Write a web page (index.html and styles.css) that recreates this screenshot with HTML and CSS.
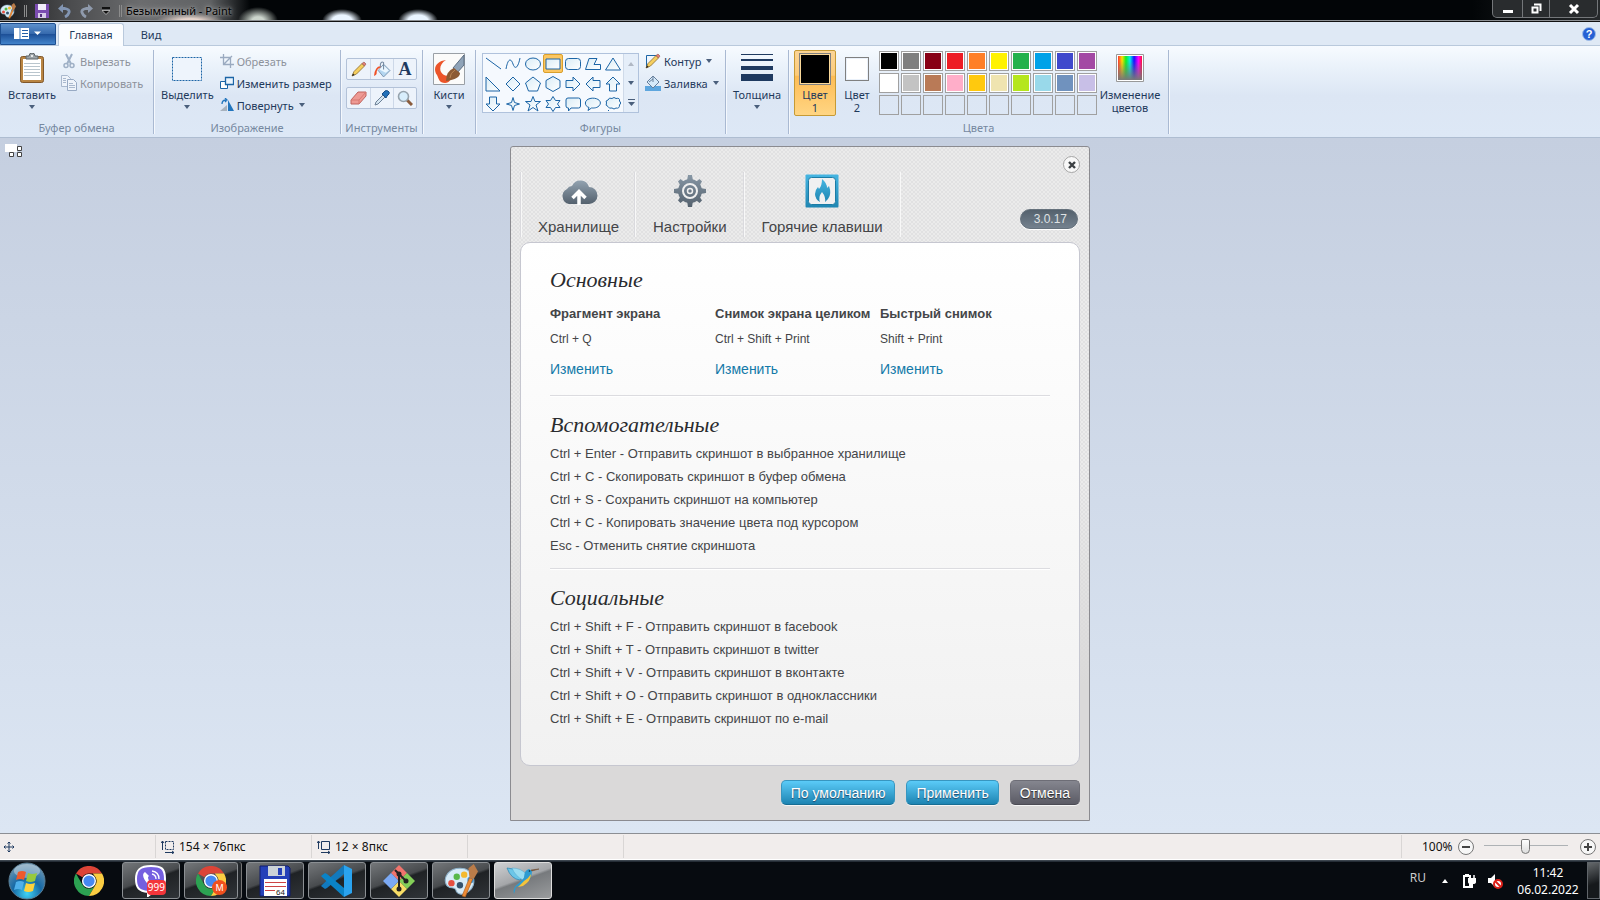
FILE: index.html
```html
<!DOCTYPE html>
<html lang="ru">
<head>
<meta charset="utf-8">
<title>Безымянный - Paint</title>
<link rel="stylesheet" href="styles.css">
</head>
<body>
<svg class="defs" width="0" height="0" aria-hidden="true">
  <defs>
    <linearGradient id="steel" x1="0" y1="0" x2="0" y2="1"><stop offset="0" stop-color="#93a3b1"/><stop offset="1" stop-color="#54616e"/></linearGradient>
    <linearGradient id="steelpage" gradientUnits="userSpaceOnUse" x1="0" y1="3" x2="0" y2="35"><stop offset="0" stop-color="#8797a5"/><stop offset="1" stop-color="#54616e"/></linearGradient>
    <linearGradient id="azure" x1="0" y1="0" x2="0" y2="1"><stop offset="0" stop-color="#45b5e2"/><stop offset="1" stop-color="#1f86b2"/></linearGradient>
    <linearGradient id="shapefill" x1="0" y1="0" x2="1" y2="1"><stop offset="0" stop-color="#d9ecf6"/><stop offset="1" stop-color="#fff"/></linearGradient>
    <linearGradient id="rainbow"><stop offset="0" stop-color="#f33"/><stop offset=".17" stop-color="#fd0"/><stop offset=".33" stop-color="#1e2"/><stop offset=".5" stop-color="#0ee"/><stop offset=".67" stop-color="#11f"/><stop offset=".85" stop-color="#f0f"/><stop offset="1" stop-color="#f13"/></linearGradient>
    <linearGradient id="fade" x1="0" y1="0" x2="0" y2="1"><stop offset=".2" stop-color="#777" stop-opacity="0"/><stop offset="1" stop-color="#777"/></linearGradient>
    <radialGradient id="orb" cx=".5" cy=".85" r=".9"><stop offset="0" stop-color="#3fd3f5"/><stop offset=".45" stop-color="#1669a5"/><stop offset="1" stop-color="#7f9fb5"/></radialGradient>
    <symbol id="pencil" viewBox="0 0 16 16"><path d="M1 15l2-4.500L11 2.500l2.500 2.500L5.500 13z" fill="#f5cf60" stroke="#8a6a2c" stroke-width=".8"/><path d="M11 2.500l2-1.500 2 2-1.500 2z" fill="#e08078" stroke="#96504a" stroke-width=".6"/><path d="M1 15l1-2.600 1.700 1.500z" fill="#222"/></symbol>
    <symbol id="bucket" viewBox="0 0 16 16"><path d="M9 3l6 6-6 6-5-6z" fill="#b4d6f0" stroke="#6f8ba8" stroke-width=".8"/><path d="M5 8l4-4 5 5-3 2z" fill="#eaf6ff"/><path d="M9 8V1.500q-2-1.500-3 1.500v3" fill="none" stroke="#768ba3"/><path d="M6 5Q1 5 0 14q3-1 2.500-4Q3 7 6 6z" fill="#ef5127"/></symbol>
    <symbol id="palette" viewBox="0 0 32 32"><path d="M15 4C5 4-1 12 2 19c2 5 8 2 9 5 1 5 7 6 12 2C32 20 29 4 15 4z" fill="#d7ebf7" stroke="#8fb2ca"/><circle cx="15" cy="20" r="3" fill="#35536e"/><circle cx="7" cy="18" r="3" fill="#e54f40"/><circle cx="12" cy="12" r="3" fill="#58b84a"/><circle cx="19" cy="10" r="3" fill="#f4b92f"/><circle cx="25" cy="15" r="3" fill="#3c93d5"/><path d="M17 30l7-17 3 1-7 17z" fill="#ed8b35" stroke="#a65a1c" stroke-width=".6"/><path d="M24 13l-1-9 5-4 4 7-4 7z" fill="#ba7c49"/></symbol>
    <symbol id="chrome" viewBox="0 0 32 32"><path d="M2.100 8A16 16 0 0 1 29.900 8H16a8 8 0 0 0-7 4z" fill="#dc4437"/><path d="M2.100 8A16 16 0 0 0 16 32l7-12a8 8 0 0 1-14 0z" fill="#2ca252"/><path d="M29.900 8A16 16 0 0 1 16 32l7-12a8 8 0 0 0 0-8l-3-4z" fill="#fbcd42"/><circle cx="16" cy="16" r="7.500" fill="#fff"/><circle cx="16" cy="16" r="6" fill="#4688f1"/></symbol>
  </defs>
</svg>

<header class="titlebar">
  <div class="quick">
    <svg width="16" height="16"><use href="#palette"/></svg>
    <span class="grip"></span>
    <button class="tiny" aria-label="Сохранить"><svg width="14" height="14" viewBox="0 0 14 14"><path d="M0 0h14v14H0z" fill="#7b4cb0"/><path d="M3 0h8v6H3z" fill="#f2edfa"/><path d="M3 9h8v5H3z" fill="#d8cce9"/><path d="M5 10h2v3H5z" fill="#553080"/></svg></button>
    <button class="tiny" aria-label="Отменить"><svg width="13" height="14" viewBox="0 0 13 14"><path d="M3 4.500h4q5 1 4 4t-4 4.500" fill="none" stroke="#8295b2" stroke-width="2.800"/><path d="M0 4.500L5 0v9z" fill="#8295b2"/></svg></button>
    <button class="tiny" aria-label="Вернуть"><svg width="13" height="14" viewBox="0 0 13 14"><path d="M10 4.500H6q-5 1-4 4t4 4.500" fill="none" stroke="#8f9aac" stroke-width="2.800"/><path d="M13 4.500L8 0v9z" fill="#8f9aac"/></svg></button>
    <button class="tiny" aria-label="Настройка панели"><svg width="8" height="8" viewBox="0 0 8 8"><path d="M0 1h8" stroke="#111" stroke-width="2"/><path d="M0 3.500h8L4 7.500z" fill="#111" stroke="#ddd" stroke-width=".7"/></svg></button>
    <span class="grip"></span>
    <span class="wintitle">Безымянный - Paint</span>
  </div>
  <div class="wincontrols">
    <button class="wc" aria-label="Свернуть"><svg width="12" height="12" viewBox="0 0 12 12"><path d="M1 7h10v3H1z" fill="#fff"/></svg></button>
    <button class="wc restore" aria-label="Восстановить"><svg width="12" height="12" viewBox="0 0 12 12"><path d="M4 1.500h6.500V8M2.500 4.500h5v5h-5z" fill="none" stroke="#fff" stroke-width="2"/></svg></button>
    <button class="wc close" aria-label="Закрыть"><svg width="12" height="12" viewBox="0 0 12 12"><path d="M2 2l8 8M10 2l-8 8" stroke="#fff" stroke-width="3"/></svg></button>
  </div>
</header>

<nav class="tabs">
  <button class="filemenu" aria-label="Меню Paint"><svg width="28" height="14" viewBox="0 0 28 14"><path d="M0 1h15v11H0z" fill="#fff"/><path d="M6 1v11" stroke="#3a76bb"/><path d="M8 3.500h6M8 6.500h6M8 9.500h6" stroke="#235fa8"/><path d="M20 4.500h7L23.500 8z" fill="#fff"/></svg></button>
  <button class="tab active">Главная</button>
  <button class="tab">Вид</button>
  <button class="help" aria-label="Справка">?</button>
</nav>

<section class="ribbon">
  <div class="group g-clip">
    <div class="gbody">
      <button class="big"><svg width="32" height="32" viewBox="0 0 32 32"><rect x="4.500" y="3.500" width="23" height="26" rx="2" fill="#b98543" stroke="#80572a"/><path d="M7 6h18v21H7z" fill="#fff"/><path d="M8 10.500h16M8 13.500h16M8 16.500h16M8 19.500h16M8 22.500h16" stroke="#b9c5cd"/><path d="M10 6V3h3q0-3 3-3t3 3h3v3z" fill="#9ba3a8" stroke="#5c6468"/><circle cx="16" cy="3" r="1" fill="#fff"/></svg><span>Вставить</span><i class="arrow"></i></button>
      <div class="smalls">
        <button class="small off"><svg width="16" height="16" viewBox="0 0 16 16"><path d="M5 1l5 10M11 1L6 11" stroke="#9fb0c6" stroke-width="2"/><circle cx="5" cy="12.500" r="2" fill="none" stroke="#9fb0c6" stroke-width="1.500"/><circle cx="11" cy="12.500" r="2" fill="none" stroke="#9fb0c6" stroke-width="1.500"/></svg>Вырезать</button>
        <button class="small off"><svg width="16" height="16" viewBox="0 0 16 16"><path d="M.5.5h6l3 3v8h-9z" fill="#eef3fa" stroke="#a9b8cd"/><path d="M6.500 4.500h6l3 3v8h-9z" fill="#eef3fa" stroke="#98aac4"/><path d="M8 8.500h4M8 10.500h6M8 12.500h6M2 3.500h3M2 5.500h3M2 7.500h3" stroke="#a9b8cd"/></svg>Копировать</button>
      </div>
    </div>
    <div class="glabel">Буфер обмена</div>
  </div>

  <div class="group g-image">
    <div class="gbody">
      <button class="big"><svg width="32" height="32" viewBox="0 0 32 32"><rect x="1.500" y="4.500" width="29" height="23" fill="#eef4fc" stroke="#1c65a6" stroke-dasharray="2 1"/></svg><span>Выделить</span><i class="arrow"></i></button>
      <div class="smalls">
        <button class="small off"><svg width="14" height="14" viewBox="0 0 14 14"><path d="M3.500 0v10.500H14M0 3.500h10.500V14M4 10l8-8" fill="none" stroke="#9aaac0" stroke-width="1.300"/></svg>Обрезать</button>
        <button class="small"><svg width="14" height="14" viewBox="0 0 14 14"><path d="M5 5.500H.5v7h7V9" fill="#fff" stroke="#1c65a6"/><path d="M5.500 1.500h8v7h-8z" fill="#eaf4fd" stroke="#1c65a6" stroke-width="1.300"/></svg>Изменить размер</button>
        <button class="small"><svg width="14" height="14" viewBox="0 0 14 14"><path d="M8 2v11h6z" fill="#2275bd"/><path d="M7 7v6H0z" fill="#a8b2bd"/><path d="M2 6q0-4 4-4M5 0l2 2-2 2" fill="none" stroke="#2275bd" stroke-width="1.300"/></svg>Повернуть<i class="arrow"></i></button>
      </div>
    </div>
    <div class="glabel">Изображение</div>
  </div>

  <div class="group g-tools">
    <div class="gbody toolrows">
      <div class="toolrow">
        <button aria-label="Карандаш"><svg width="16" height="16"><use href="#pencil"/></svg></button>
        <button aria-label="Заливка цветом"><svg width="17" height="17"><use href="#bucket"/></svg></button>
        <button class="letter">A</button>
      </div>
      <div class="toolrow">
        <button aria-label="Ластик"><svg width="17" height="15" viewBox="0 0 17 15"><path d="M1 9l7-8h8v4l-7 8H1z" fill="#ee9a94" stroke="#c0625c"/><path d="M1 9h8l7-8M9 9v4" fill="none" stroke="#d77871"/></svg></button>
        <button aria-label="Палитра"><svg width="16" height="16" viewBox="0 0 16 16"><path d="M1 15l1-3 7-7 2 2-7 7z" fill="#d6e6f2" stroke="#6c8096"/><path d="M8 4l4 4 1-2 2-2q1-2-1-3t-3 0L9 3z" fill="#2270b8" stroke="#174e88"/></svg></button>
        <button aria-label="Масштаб"><svg width="16" height="16" viewBox="0 0 16 16"><path d="M10 10l5 5" stroke="#8a5c3c" stroke-width="3"/><circle cx="6.500" cy="6.500" r="5" fill="#d8eefc" stroke="#96a3ad" stroke-width="1.600"/></svg></button>
      </div>
    </div>
    <div class="glabel">Инструменты</div>
  </div>

  <div class="group g-brush">
    <div class="gbody">
      <button class="big"><svg width="32" height="32" viewBox="0 0 32 32"><path d="M.5.5h31v31H.5z" fill="#fbfbfa" stroke="#9aa0a6"/><path d="M13 7C4 8-1 15 4 22c2 4 2 8 8 8 5 0 6-4 6-8-5 2-8 0-10-3-2-4 0-9 5-12z" fill="#ec552a"/><path d="M20 15L31 2v10l-7 8z" fill="#8fa3b8" stroke="#5c6e82"/><path d="M13 28q0-10 8-13l6 5q0 6-14 8z" fill="#8c5b34"/><path d="M17 25q0-5 5-8" fill="none" stroke="#b98452"/></svg><span>Кисти</span><i class="arrow"></i></button>
    </div>
  </div>

  <div class="group g-shapes">
    <div class="gbody">
      <div class="gallery">
        <div class="shapes">
          <button aria-label="Линия"><svg viewBox="0 0 20 20"><path d="M3 4l15 11"/></svg></button>
          <button aria-label="Кривая"><svg viewBox="0 0 20 20"><path d="M3 15C5 4 8 4 10 10s5 4 7-6" fill="none"/></svg></button>
          <button aria-label="Овал"><svg viewBox="0 0 20 20"><ellipse cx="10" cy="10" rx="7.500" ry="6"/></svg></button>
          <button class="picked" aria-label="Прямоугольник"><svg viewBox="0 0 20 20"><path d="M3 5h14v10H3z"/></svg></button>
          <button aria-label="Скругленный прямоугольник"><svg viewBox="0 0 20 20"><rect x="2.500" y="4.500" width="15" height="11" rx="3"/></svg></button>
          <button aria-label="Многоугольник"><svg viewBox="0 0 20 20"><path d="M6 4.500h8l-3 6h6.500v5h-15z"/></svg></button>
          <button aria-label="Треугольник"><svg viewBox="0 0 20 20"><path d="M10 4l7.500 12h-15z"/></svg></button>
          <button aria-label="Прямоугольный треугольник"><svg viewBox="0 0 20 20"><path d="M3 3v14h14z"/></svg></button>
          <button aria-label="Ромб"><svg viewBox="0 0 20 20"><path d="M10 3l7 7-7 7-7-7z"/></svg></button>
          <button aria-label="Пятиугольник"><svg viewBox="0 0 20 20"><path d="M10 3l7.500 6-3 8h-9l-3-8z"/></svg></button>
          <button aria-label="Шестиугольник"><svg viewBox="0 0 20 20"><path d="M10 2.500l7 4v7l-7 4-7-4v-7z"/></svg></button>
          <button aria-label="Стрелка вправо"><svg viewBox="0 0 20 20"><path d="M3 6.500h7V3l7 7-7 7v-3.500H3z"/></svg></button>
          <button aria-label="Стрелка влево"><svg viewBox="0 0 20 20"><path d="M17 6.500h-7V3l-7 7 7 7v-3.500h7z"/></svg></button>
          <button aria-label="Стрелка вверх"><svg viewBox="0 0 20 20"><path d="M6.500 17v-7H3l7-7 7 7h-3.500v7z"/></svg></button>
          <button aria-label="Стрелка вниз"><svg viewBox="0 0 20 20"><path d="M6.500 3v7H3l7 7 7-7h-3.500V3z"/></svg></button>
          <button aria-label="Четырехконечная звезда"><svg viewBox="0 0 20 20"><path d="M10 3.500l1.500 5 5 1.500-5 1.500-1.500 5-1.500-5-5-1.500 5-1.500z"/></svg></button>
          <button aria-label="Пятиконечная звезда"><svg viewBox="0 0 20 20"><path d="M10 2.500l2 5h5.500l-4.500 3.500 2 6-5-3.500L5 17l2-6-4.500-3.500H8z"/></svg></button>
          <button aria-label="Шестиконечная звезда"><svg viewBox="0 0 20 20"><path d="M10 2.500l2.500 4h4.500L14.500 10l2.500 3.500h-4.500l-2.500 4-2.500-4H3L5.500 10 3 6.500h4.500z"/></svg></button>
          <button aria-label="Прямоугольная выноска"><svg viewBox="0 0 20 20"><path d="M5 4h10.500q2 0 2 2v6q0 2-2 2H8l-2.500 3v-3H5q-2 0-2-2V6q0-2 2-2z"/></svg></button>
          <button aria-label="Овальная выноска"><svg viewBox="0 0 20 20"><path d="M6 13.500C1 12 1 6 7 4.500c6-1.500 12 2 10 6S10 14 8.500 14L5 16.500z"/></svg></button>
          <button aria-label="Выноска-облако"><svg viewBox="0 0 20 20"><path d="M5 6q1-3 4-1.500 2-2 4 0 4-1 3.500 2.500 2.500 2 0 4 0 4-3.500 3-2 2-4 0-3 1-4-1.500-3-1-1.500-3.500-1.500-2.500 1.500-3z"/><path d="M5 16.500h1"/></svg></button>
        </div>
        <div class="scroller">
          <button aria-label="Вверх"><i class="arrow up"></i></button>
          <button aria-label="Вниз"><i class="arrow"></i></button>
          <button aria-label="Все фигуры"><svg width="7" height="8" viewBox="0 0 7 8"><path d="M0 1h7v1H0zM0 4h7L3.500 8z" fill="#4a5f7c"/></svg></button>
        </div>
      </div>
      <div class="smalls">
        <button class="small"><svg width="16" height="16" viewBox="0 0 16 16"><path d="M12 2.500H1.500v11H4" fill="none" stroke="#1c65a6"/><use href="#pencil"/></svg>Контур<i class="arrow"></i></button>
        <button class="small"><svg width="16" height="16" viewBox="0 0 16 16"><path d="M0 11h16v5H0z" fill="#5ea6de"/><path d="M8 1l6 6-6 6-6-6z" fill="#d6eafa" stroke="#667f9b"/><path d="M8 7V1M4 7l4-3" fill="none" stroke="#667f9b"/></svg>Заливка<i class="arrow"></i></button>
      </div>
    </div>
    <div class="glabel">Фигуры</div>
  </div>

  <div class="group g-size">
    <div class="gbody">
      <button class="big"><svg width="32" height="32" viewBox="0 0 32 32"><path d="M0 1h32v1H0zM0 6h32v2H0zM0 13h32v4H0zM0 21h32v7H0z" fill="#1f3a60"/></svg><span>Толщина</span><i class="arrow"></i></button>
    </div>
  </div>

  <div class="group g-colors">
    <div class="gbody">
      <button class="big color selected"><b class="sw black"></b><span>Цвет</span><span class="l2">1</span></button>
      <button class="big color"><b class="sw white"></b><span>Цвет</span><span class="l2">2</span></button>
      <div class="palette">
        <button class="c1" aria-label="Черный"></button><button class="c2" aria-label="Серый"></button><button class="c3" aria-label="Темно-красный"></button><button class="c4" aria-label="Красный"></button><button class="c5" aria-label="Оранжевый"></button><button class="c6" aria-label="Желтый"></button><button class="c7" aria-label="Зеленый"></button><button class="c8" aria-label="Бирюзовый"></button><button class="c9" aria-label="Индиго"></button><button class="c10" aria-label="Лиловый"></button>
        <button class="c11" aria-label="Белый"></button><button class="c12" aria-label="Светло-серый"></button><button class="c13" aria-label="Коричневый"></button><button class="c14" aria-label="Розовый"></button><button class="c15" aria-label="Золотой"></button><button class="c16" aria-label="Бежевый"></button><button class="c17" aria-label="Лайм"></button><button class="c18" aria-label="Голубой"></button><button class="c19" aria-label="Сизый"></button><button class="c20" aria-label="Сиреневый"></button>
        <button class="none" aria-label="Пусто"></button><button class="none" aria-label="Пусто"></button><button class="none" aria-label="Пусто"></button><button class="none" aria-label="Пусто"></button><button class="none" aria-label="Пусто"></button><button class="none" aria-label="Пусто"></button><button class="none" aria-label="Пусто"></button><button class="none" aria-label="Пусто"></button><button class="none" aria-label="Пусто"></button><button class="none" aria-label="Пусто"></button>
      </div>
      <button class="big edit"><svg width="32" height="32" viewBox="0 0 32 32"><path d="M2.500 1.500h27v27h-27z" fill="#fff" stroke="#999"/><path d="M4 3h24v24H4z" fill="url(#rainbow)"/><path d="M4 3h24v24H4z" fill="url(#fade)"/></svg><span>Изменение</span><span class="l2">цветов</span></button>
    </div>
    <div class="glabel">Цвета</div>
  </div>
</section>

<main class="workspace">
  <div class="sheet"><svg width="18" height="14" viewBox="0 0 18 14"><path d="M0 0h12v8H0z" fill="#fff"/><path d="M12.500 2.500h4v4h-4zM12.500 8.500h4v4h-4zM4.500 8.500h4v4h-4z" fill="#fff" stroke="#444"/></svg></div>

  <section class="dialog" aria-label="Горячие клавиши">
    <div class="dhead">
      <div class="dtabs">
        <button class="dtab"><svg width="38" height="38" viewBox="0 0 38 38"><path d="M9 33a8 8 0 0 1-2-15 6 6 0 0 1 5-3 9 9 0 0 1 17 1 8.500 8.500 0 0 1 0 17z" transform="translate(0 -1)" fill="url(#steel)"/><path d="M19 33V22M12.500 26l6.500-6.500 6.500 6.500" fill="none" stroke="#fff" stroke-width="3.500"/></svg>Хранилище</button>
        <button class="dtab"><svg width="38" height="38" viewBox="0 0 38 38"><g fill="url(#steelpage)"><circle cx="19" cy="19" r="12"/><path d="M17 3h4l1 6h-6zM17 35h4l1-6h-6zM3 17v4l6 1v-6zM35 17v4l-6 1v-6zM7 9.500L9.500 7l5 4-4 4zM31 9.500L28.500 7l-5 4 4 4zM7 28.500L9.500 31l5-4-4-4zM31 28.500L28.500 31l-5-4 4-4z"/></g><circle cx="19" cy="19" r="7" fill="none" stroke="#f0f0f0" stroke-width="2"/><circle cx="19" cy="19" r="2.500" fill="none" stroke="#f0f0f0" stroke-width="1.500"/></svg>Настройки</button>
        <button class="dtab"><svg width="38" height="38" viewBox="0 0 38 38"><rect x="2.500" y="2.500" width="33" height="33" rx="1" fill="url(#azure)"/><rect x="5.500" y="5.500" width="27" height="27" rx="3" fill="#f0f0f1" stroke="#1c7ca6"/><path d="M19 7q5 4 5 9l2-2q3 8-1 13l-3 3q1-5-3-10-4 5-2 10-5-3-5-8 0-4 3-7l1 2q3-3 3-10z" fill="url(#azure)"/></svg>Горячие клавиши</button>
      </div>
      <div class="dside">
        <button class="dclose" aria-label="Закрыть окно"><svg width="8" height="8" viewBox="0 0 8 8"><path d="M1 1l6 6M7 1L1 7" stroke="#3c4043" stroke-width="2.400"/></svg></button>
        <span class="version">3.0.17</span>
      </div>
    </div>

    <div class="panel">
      <section class="block">
        <h2>Основные</h2>
        <div class="keys">
          <div><h3>Фрагмент экрана</h3><p>Ctrl + Q</p><a href="#">Изменить</a></div>
          <div><h3>Снимок экрана целиком</h3><p>Ctrl + Shift + Print</p><a href="#">Изменить</a></div>
          <div><h3>Быстрый снимок</h3><p>Shift + Print</p><a href="#">Изменить</a></div>
        </div>
      </section>
      <section class="block">
        <h2>Вспомогательные</h2>
        <ul>
          <li>Ctrl + Enter - Отправить скриншот в выбранное хранилище</li>
          <li>Ctrl + C - Скопировать скриншот в буфер обмена</li>
          <li>Ctrl + S - Сохранить скриншот на компьютер</li>
          <li>Ctrl + C - Копировать значение цвета под курсором</li>
          <li>Esc - Отменить снятие скриншота</li>
        </ul>
      </section>
      <section class="block">
        <h2>Социальные</h2>
        <ul>
          <li>Ctrl + Shift + F - Отправить скриншот в facebook</li>
          <li>Ctrl + Shift + T - Отправить скриншот в twitter</li>
          <li>Ctrl + Shift + V - Отправить скриншот в вконтакте</li>
          <li>Ctrl + Shift + O - Отправить скриншот в одноклассники</li>
          <li>Ctrl + Shift + E - Отправить скриншот по e-mail</li>
        </ul>
      </section>
    </div>

    <div class="actions">
      <button class="act">По умолчанию</button>
      <button class="act">Применить</button>
      <button class="act grey">Отмена</button>
    </div>
  </section>
</main>

<footer class="status">
  <div class="cell"><svg width="12" height="12" viewBox="0 0 12 12"><path d="M6 1v10M1 6h10M4.500 2.500L6 1l1.500 1.500M4.500 9.500L6 11l1.500-1.500M2.500 4.500L1 6l1.500 1.500M9.500 4.500L11 6 9.500 7.500" fill="none" stroke="#1f3a60"/></svg></div>
  <div class="cell"><svg width="14" height="14" viewBox="0 0 14 14"><path d="M1.500 10V1M0 3l1.500-2L3 3M4 12.500h9M11 11l2 1.500-2 1.500" fill="none" stroke="#1f3a60"/><path d="M4.500 1.500h8v8h-8z" fill="none" stroke="#1f3a60" stroke-dasharray="2 1"/></svg>154 × 76пкс</div>
  <div class="cell"><svg width="14" height="14" viewBox="0 0 14 14"><path d="M1.500 9V1M0 3l1.500-2L3 3M4 12.500h9M11 11l2 1.500-2 1.500M4.500 1.500h8v8h-8z" fill="none" stroke="#1f3a60"/></svg>12 × 8пкс</div>
  <div class="cell"></div>
  <div class="zoombar">
    <label for="zoom">100%</label>
    <button class="round" aria-label="Уменьшить"><svg width="10" height="10" viewBox="0 0 10 10"><path d="M1 5h8" stroke="#444" stroke-width="2"/></svg></button>
    <input id="zoom" type="range" min="0" max="100" value="50">
    <button class="round" aria-label="Увеличить"><svg width="10" height="10" viewBox="0 0 10 10"><path d="M1 5h8M5 1v8" stroke="#444" stroke-width="2"/></svg></button>
  </div>
</footer>

<footer class="taskbar">
  <button class="start" aria-label="Пуск"><svg width="38" height="38" viewBox="0 0 38 38"><circle cx="19" cy="19" r="18" fill="url(#orb)" stroke="#5b7f95"/><ellipse cx="19" cy="9" rx="13" ry="7" fill="#fff" opacity=".35"/><path d="M10 10q4-2 8 0l-2 8q-4-2-8 0z" fill="#ee5a2c"/><path d="M20 11q4 2 9 0l-2 8q-5 2-9 0z" fill="#96c93e"/><path d="M8 20q4-2 8 0l-2 8q-4-2-8 0z" fill="#4fb0ea"/><path d="M18 21q4 2 9 0l-2 8q-5 2-9 0z" fill="#fdd23c"/></svg></button>
  <button class="pin" aria-label="Chrome"><svg width="30" height="30"><use href="#chrome"/></svg></button>
  <button class="app" aria-label="Viber"><svg width="32" height="32" viewBox="0 0 32 32"><path d="M16 1c10 0 14 2 14 13s-4 13-12 13l-5 4v-4C4 26 1 23 1 14S5 1 16 1z" fill="#755fe0" stroke="#fff" stroke-width="2"/><path d="M10 7c-4 2-1 8 3 12s9 5 10 1l-4-3-2 1q-4-2-4-6l1-1z" fill="#fff"/><path d="M17 6q7 1 7 8M17 9q4 1 4 5" fill="none" stroke="#fff" stroke-width="1.300"/></svg><span class="badge">999</span></button>
  <button class="app stack" aria-label="Chrome, окна"><svg width="30" height="30"><use href="#chrome"/></svg><span class="badge m">M</span></button>
  <button class="app" aria-label="Total Commander"><svg width="32" height="32" viewBox="0 0 32 32"><path d="M1 1h28l2 2v28H1z" fill="#2540b8" stroke="#101c6c"/><path d="M9 1h17v10H9z" fill="#cbd2d8"/><path d="M19 3h4v7h-4z" fill="#2540b8"/><path d="M5 14h23v17H5z" fill="#fff"/><path d="M6 17.500h21M6 21.500h21M6 25.500h10" stroke="#c44"/><text x="17" y="30" font-family="Liberation Sans" font-size="8" fill="#222">64</text></svg></button>
  <button class="app" aria-label="Visual Studio Code"><svg width="34" height="34" viewBox="0 0 34 34"><path d="M24 1L3 20l-2 2 4 3 2-1L24 10z" fill="#1279bd"/><path d="M24 33L3 14l-2-2 4-3 2 1 17 14z" fill="#0a83c7"/><path d="M24 1l8 4v24l-8 4z" fill="#2aa3ef"/></svg></button>
  <button class="app" aria-label="Git"><svg width="34" height="34" viewBox="0 0 34 34"><path d="M17 1l8 8-8 8-8-8z" fill="#f0746d"/><path d="M25 9l8 8-8 8-8-8z" fill="#83cf58"/><path d="M17 17l8 8-8 8-8-8z" fill="#f8dd66"/><path d="M9 9l8 8-8 8-8-8z" fill="#7ba9f4"/><path d="M13 6l4 4v16M17 10l7 7" fill="none" stroke="#222" stroke-width="2"/><circle cx="17" cy="10" r="2.500" fill="#222"/><circle cx="24" cy="17" r="2.500" fill="#222"/><circle cx="17" cy="25" r="2.500" fill="#222"/></svg></button>
  <button class="app" aria-label="Paint"><svg width="34" height="34"><use href="#palette"/></svg></button>
  <button class="app lit" aria-label="Hotkeys"><svg width="34" height="30" viewBox="0 0 34 30"><path d="M1 2q4 11 13 12l5-4Q12 3 1 2z" fill="#6cc6e8" stroke="#2a82b0" stroke-width=".7"/><path d="M6 2q3 8 11 12l3-6Q15 2 6 2z" fill="#98dcf1" stroke="#4ea9cf" stroke-width=".5"/><path d="M18 12q0-8 5-9l3 2q0 9-8 13l-8 3-2 7q-2-6 5-11z" fill="#2d9bd0"/><path d="M25 8q0 7-8 12l-5 1 6-6q5-3 7-7z" fill="#f4c23a"/><path d="M25 4l8-1-7 2z" fill="#735238" stroke="#735238" stroke-width=".6"/><circle cx="23.500" cy="5" r=".8" fill="#123"/></svg></button>
  <div class="tray">
    <span class="lang">RU</span>
    <i class="arrow up"></i>
    <svg width="14" height="16" viewBox="0 0 14 16"><path d="M1 3h6v11H1z" fill="none" stroke="#fff" stroke-width="2"/><path d="M2 1h4v2H2zM5 5h8v4q0 2-3 2v4H8v-4q-3 0-3-2z" fill="#fff"/><path d="M7 2v3M11 2v3" stroke="#fff" stroke-width="1.500"/></svg>
    <svg width="16" height="16" viewBox="0 0 16 16"><path d="M1 5h3l4-4v13l-4-4H1z" fill="#fff"/><circle cx="11" cy="11" r="4" fill="#fff" stroke="#dc2019" stroke-width="2"/><path d="M8 8l6 6" stroke="#dc2019" stroke-width="2"/></svg>
    <time class="clock">11:42<br>06.02.2022</time>
    <button class="desk" aria-label="Показать рабочий стол"></button>
  </div>
</footer>
</body>
</html>
```
FILE: styles.css
```css
* { box-sizing: border-box; }
html, body { margin: 0; }
body {
  min-height: 100vh;
  display: flex;
  flex-direction: column;
  font: 11px/13px "Noto Sans", "Open Sans", sans-serif;
  color: #1e395b;
  background: #000;
}
.defs { position: absolute; }
button { font: inherit; color: inherit; background: none; border: 0; padding: 0; margin: 0; }
svg { display: block; flex: none; }

/* Title bar */
.titlebar {
  height: 22px;
  flex: none;
  display: flex;
  justify-content: space-between;
  align-items: flex-start;
  border-bottom: 1px solid #111;
  box-shadow: inset 0 -1px #8d9094;
  background:
    radial-gradient(ellipse 20px 14px at 258px 21px, rgba(226, 236, 226, .9) 30%, rgba(226, 236, 226, 0)),
    radial-gradient(ellipse 20px 12px at 342px 21px, #eaf5ff 50%, rgba(150, 190, 240, 0)),
    radial-gradient(ellipse 20px 12px at 418px 21px, #eaf5ff 50%, rgba(150, 190, 240, 0)),
    radial-gradient(ellipse 34px 8px at 190px 21px, #e8d5cc 30%, rgba(232, 213, 204, 0)),
    linear-gradient(90deg, #1b1c1e 0, #4b4c4e 70px, #6b6c6e 140px, #606264 210px, #020507 250px, #020507 92%, #26292b);
}
.quick { display: flex; align-items: center; height: 21px; gap: 8px; }
.grip { width: 3px; height: 12px; border: solid #8c8c8c; border-width: 0 1px; }
.tiny { margin-right: 1px; }
.wintitle { color: #000; margin-left: -4px; text-shadow: 0 0 6px #bbb, 0 0 3px #aaa; }
.wincontrols { display: flex; height: 18px; margin-right: 2px; border: 1px solid #74777a; border-top: 0; border-radius: 0 0 5px 5px; background: #292c2e; }
.wc { width: 30px; display: flex; justify-content: center; align-items: center; border-right: 1px solid #74777a; }
.restore { width: 27px; }
.close { width: 47px; border: 0; }

/* Ribbon tabs */
.tabs { height: 24px; flex: none; display: flex; align-items: stretch; background: #dfe9f5; border-bottom: 1px solid #b9c9dc; padding-top: 1px; }
.filemenu { width: 56px; margin-right: 2px; display: flex; align-items: center; justify-content: center; border: 1px solid #1d4f91; border-radius: 0 2px 0 0; background: linear-gradient(#5d90cb, #3569ad 50%, #1c4f97 51%, #4384cb); }
.tab { width: 66px; }
.tab.active { background: #fbfdff; border: 1px solid #b9c9dc; border-bottom: 0; border-radius: 3px 3px 0 0; margin-bottom: -1px; padding-bottom: 2px; }
.tab:not(.active) { width: 54px; }
.help { margin: 4px 4px 0 auto; width: 14px; height: 14px; border-radius: 50%; background: #2560d4; color: #fff; font: bold 11px/12px "Liberation Sans", sans-serif; border: 1px solid #9fbde8; }

/* Ribbon */
.ribbon { flex: none; display: flex; min-height: 91px; padding: 4px 0 0; border-bottom: 1px solid #aebdd1; background: linear-gradient(#f7fbff, #e9f1fa 25%, #dce6f4 55%, #dde8f6); }
.group { display: flex; flex-direction: column; flex: none; margin: 0 0 3px; border-right: 1px solid #a9b9d2; box-shadow: 1px 0 #f4f8fd; }
.gbody { display: flex; height: 66px; align-items: flex-start; }
.glabel { text-align: center; color: #7688a0; padding-top: 5px; }
.g-clip { width: 154px; }
.g-image { width: 187px; }
.g-tools { width: 82px; }
.g-brush { width: 53px; }
.g-shapes { width: 250px; }
.g-size { width: 63px; }
.g-colors { width: 380px; }
.big { display: flex; flex-direction: column; align-items: center; height: 66px; padding-top: 3px; min-width: 52px; }
.big span { margin-top: 3px; white-space: nowrap; }
.big .l2 { margin-top: 0; }
.big .arrow { margin-top: 4px; }
.arrow { display: block; width: 0; height: 0; border: solid transparent; border-width: 4px 3px 0; border-top-color: #4a5f7c; }
.arrow.up { border-width: 0 3px 4px; border-bottom-color: #b0b8c4; }
.smalls { display: flex; flex-direction: column; }
.small { display: flex; align-items: center; gap: 3px; height: 22px; white-space: nowrap; }
.small .arrow { margin-left: 2px; }
.off { color: #8d929b; }
.g-clip .gbody { padding-left: 6px; gap: 3px; }
.g-image .gbody { padding-left: 7px; gap: 6px; }
.toolrows { flex-direction: column; align-items: center; gap: 7px; padding-top: 8px; }
.toolrow { display: flex; border: 1px solid #b3c2d8; border-radius: 2px; background: #edf3fb; }
.toolrow button { width: 23px; height: 20px; display: flex; align-items: center; justify-content: center; border-left: 1px solid #cdd8e8; }
.toolrow button:first-child { border-left: 0; }
.toolrow .letter { font: bold 18px/20px "Liberation Serif", serif; color: #1f3a60; }
.g-shapes .gbody { padding-left: 6px; gap: 6px; }
.gallery { display: flex; margin-top: 3px; height: 60px; border: 1px solid #b0c2dc; background: #f5f9fe; }
.shapes { display: grid; grid-template-columns: repeat(7, 20px); grid-auto-rows: 19px; row-gap: 1px; }
.shapes button { display: flex; align-items: center; border-radius: 2px; }
.shapes svg { width: 20px; height: 20px; fill: url(#shapefill); stroke: #1c65a6; stroke-width: 1; }
.shapes .picked { background: #fcc660; border: 1px solid #d9a02c; }
.shapes .picked svg { margin: -1px; }
.scroller { display: flex; flex-direction: column; width: 15px; border-left: 1px solid #cfdae9; background: #e5eef9; }
.scroller button { flex: 1; display: flex; align-items: center; justify-content: center; }
.g-brush .gbody, .g-size .gbody { justify-content: center; }
.g-colors .gbody { padding-left: 5px; }
.color { min-width: 42px; }
.selected { border: 1px solid #c69a35; border-radius: 2px; padding-top: 2px; background: linear-gradient(#fcd597, #fccb7a 38%, #fdbc55 39%, #ffd583); }
.sw { display: block; border: 1px solid #808080; }
.black { width: 32px; height: 32px; background: #000; box-shadow: inset 0 0 0 1px #fbd999; }
.white { width: 24px; height: 24px; margin: 4px; background: #fff; box-shadow: inset 0 0 0 1px #eaf1fa; }
.palette { display: grid; grid-template-columns: repeat(10, 20px); grid-auto-rows: 20px; gap: 2px; margin: 1px 1px 0; }
.palette button { border: 1px solid #a0a0a0; box-shadow: inset 0 0 0 1px #fff; }
.palette .none { box-shadow: none; }
.edit { min-width: 64px; }
.c1 { background: #000; } .c2 { background: #7f7f7f; } .c3 { background: #880015; } .c4 { background: #ed1c24; } .c5 { background: #ff7f27; }
.c6 { background: #fff200; } .c7 { background: #22b14c; } .c8 { background: #00a2e8; } .c9 { background: #3f48cc; } .c10 { background: #a349a4; }
.c11 { background: #fff; } .c12 { background: #c3c3c3; } .c13 { background: #b97a57; } .c14 { background: #ffaec9; } .c15 { background: #ffc90e; }
.c16 { background: #efe4b0; } .c17 { background: #b5e61d; } .c18 { background: #99d9ea; } .c19 { background: #7092be; } .c20 { background: #c8bfe7; }

/* Workspace */
.workspace { flex: 1; position: relative; padding: 8px 0 12px; background: linear-gradient(#c5cfe0, #dce6f3); }
.sheet { position: absolute; left: 5px; top: 6px; }

/* Dialog */
.dialog {
  width: 580px;
  margin: 0 auto;
  padding: 0 9px 15px;
  border: 1px solid #8b8b90;
  border-radius: 3px 3px 0 0;
  background:
    linear-gradient(rgba(218, 217, 217, 0), rgba(218, 217, 217, 0) 50%, #dad9d9 80%),
    repeating-conic-gradient(#e1e1e2 0 25%, #ebebeb 0 50%) 0 0 / 4px 4px;
  font: 13px/23px "Liberation Sans", Arial, sans-serif;
  color: #444548;
}
.dhead { display: flex; justify-content: space-between; height: 95px; }
.dtabs { display: flex; padding: 25px 0 0 1px; height: 90px; }
.dtab { display: flex; flex-direction: column; align-items: center; justify-content: flex-start; padding: 0 17px; font-size: 15px; line-height: 18px; gap: 8px; border-left: 1px solid #f8f8f8; box-shadow: -1px 0 #dadade; white-space: nowrap; }
.dtab:first-child { padding: 0 16px; }
.dtab:last-child { border-right: 1px solid #f8f8f8; }
.dside { display: flex; flex-direction: column; align-items: flex-end; justify-content: space-between; padding: 9px 0 13px; }
.dclose { width: 17px; height: 17px; border-radius: 50%; border: 1px solid #a5a5a5; background: #f8f8f8; display: flex; align-items: center; justify-content: center; }
.version { width: 58px; height: 20px; border-radius: 10px; margin-right: 2px; padding: 0 10px; background: linear-gradient(#54616d, #74818e); border: 1px solid #65717c; box-shadow: 0 1px #fff; color: #dfe2e4; font-size: 12px; line-height: 19px; text-align: right; }
.panel { min-height: 524px; padding: 24px 29px 33px; border: 1px solid #c6c7d0; border-radius: 10px; background: linear-gradient(#fff, #f1f1f1); }
.block { border-bottom: 1px solid #dcdce0; box-shadow: 0 1px #fff; padding-bottom: 10px; margin-bottom: 16px; }
.block:last-child { border: 0; margin: 0; padding: 0; box-shadow: none; }
h2 { margin: 0 0 4px; font: italic 22px/26px "Liberation Serif", serif; color: #2a2b2e; }
h3, p, ul { margin: 0; padding: 0; }
ul { list-style: none; padding-bottom: 1px; }
.keys { display: grid; grid-template-columns: repeat(3, 165px); padding: 4px 0 4px; white-space: nowrap; }
h3 { font-size: 13px; line-height: 26px; }
.keys p { font-size: 12px; line-height: 24px; padding-bottom: 6px; }
.keys a { color: #1379a8; font-size: 14px; line-height: 24px; text-decoration: none; }
.actions { display: flex; justify-content: flex-end; gap: 11px; padding-top: 14px; }
.act { height: 25px; min-width: 70px; padding: 0 9px; border-radius: 5px; border: 1px solid #3796c0; border-bottom-color: #176d93; background: linear-gradient(#5bcbf8, #1d84b2); box-shadow: 0 1px #f4f4f4; color: #fff; font-size: 14px; line-height: 22px; text-shadow: 0 1px 1px #246; }
.grey { background: linear-gradient(#85868f, #5b5b65); border-color: #6d6d76; border-bottom-color: #4b4b54; text-shadow: 0 1px 1px #222; }

/* Status bar */
.status { flex: none; height: 27px; display: flex; align-items: stretch; padding: 1px 0; border-top: 1px solid #8c8f94; border-bottom: 1px solid #fff; background: #f1edec; color: #111; font-size: 12px; }
.cell { width: 156px; display: flex; align-items: center; gap: 4px; padding-left: 5px; border-right: 1px solid #d9d6d5; }
.cell:first-child { padding-left: 3px; }
.zoombar { margin-left: auto; width: 199px; padding: 0 4px 0 20px; display: flex; align-items: center; gap: 5px; border-left: 1px solid #d9d6d5; }
.round { width: 16px; height: 16px; flex: none; border: 1px solid #777; border-radius: 50%; display: flex; align-items: center; justify-content: center; background: #f7f7f7; }
.zoombar input { appearance: none; flex: 1; min-width: 0; height: 18px; margin: 0 7px 0 5px; background: linear-gradient(#aeb2b5, #aeb2b5) 0 7px / 100% 1px no-repeat; }
.zoombar input::-webkit-slider-thumb { appearance: none; width: 9px; height: 15px; border: 1px solid #777; border-radius: 2px 2px 5px 5px; background: linear-gradient(#fff, #ddd); }

/* Taskbar */
.taskbar { flex: none; height: 40px; display: flex; align-items: stretch; gap: 4px; padding: 1px 0 1px 8px; background: #070b10; border-top: 1px solid #3d464f; box-shadow: inset 0 1px #252d36; }
.start { width: 38px; }
.pin { width: 68px; padding-left: 24px; display: flex; align-items: center; }
.app { position: relative; width: 58px; display: flex; align-items: center; justify-content: center; border: 1px solid #8b8f93; border-radius: 3px; background: linear-gradient(160deg, #74777a, #484b4e 45%, #1f2225 50%, #303438); }
.stack { width: 54px; margin-right: 4px; box-shadow: 3px 0 #22262a, 4px 0 #777; }
.lit { background: linear-gradient(160deg, #cfd1d3, #a4a6a9 45%, #777a7d 50%, #9a9c9e); border-color: #ddd; }
.badge { position: absolute; right: 13px; bottom: 3px; padding: 0 1px; height: 15px; border-radius: 4px; background: #f3353a; color: #fff; font: 10px/15px "Noto Sans", sans-serif; }
.badge.m { right: 10px; width: 15px; border-radius: 50%; background: #f0501e; font-size: 9px; }
.tray { margin-left: auto; display: flex; align-items: center; color: #fff; font-size: 12px; line-height: 17px; }
.lang { margin-right: 16px; padding-bottom: 6px; color: #ccc; }
.tray .arrow { border-bottom-color: #fff; margin-right: 15px; }
.tray svg { margin-right: 10px; }
.clock { text-align: center; width: 64px; margin-left: 3px; }
.desk { align-self: stretch; width: 13px; margin-left: 7px; border: 1px solid #60656a; background: linear-gradient(160deg, #64686b, #16191c 60%); }
```
